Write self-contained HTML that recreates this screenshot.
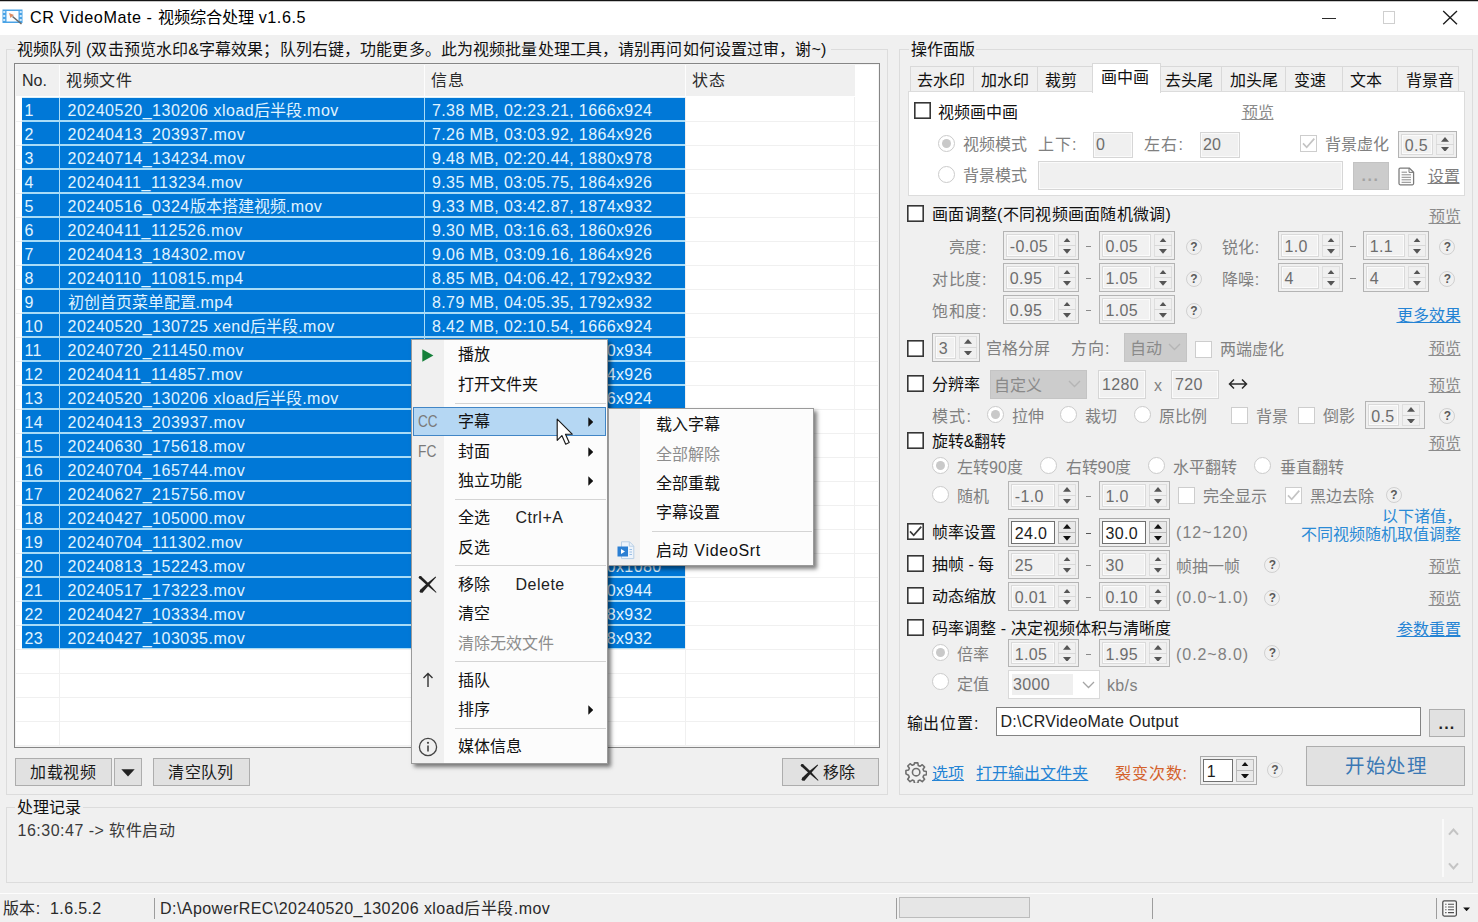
<!DOCTYPE html>
<html lang="zh-CN"><head><meta charset="utf-8"><title>CR VideoMate</title>
<style>
html,body{margin:0;padding:0;}
body{width:1478px;height:922px;overflow:hidden;background:#f0f0f0;position:relative;
 font-family:"Liberation Sans",sans-serif;font-size:16px;}
body>div,body>svg{position:absolute;}
.t{white-space:nowrap;}
</style></head><body>
<div style="left:0px;top:0px;width:1478px;height:34.6px;background:#fff;"></div>
<div style="left:0px;top:0px;width:1478px;height:1px;background:#141414;"></div>
<div style="left:0px;top:1px;width:1478px;height:1px;background:#9b9b9b;opacity:.55;"></div>
<svg style="left:2px;top:9px" width="22" height="16" viewBox="0 0 22 16"><rect x="0.5" y="0.5" width="20" height="13.5" fill="#4aa3e6"/><rect x="4.5" y="2" width="12" height="10.5" fill="#fbfdff"/><rect x="1.2" y="2" width="2" height="2" fill="#cfe8fa"/><rect x="1.2" y="6" width="2" height="2" fill="#cfe8fa"/><rect x="1.2" y="10" width="2" height="2" fill="#cfe8fa"/><rect x="17.7" y="2" width="2" height="2" fill="#cfe8fa"/><rect x="17.7" y="6" width="2" height="2" fill="#cfe8fa"/><rect x="17.7" y="10" width="2" height="2" fill="#cfe8fa"/><path d="M7 4 L12 6 L10 7.5 L8.5 9 Z" fill="#dd8a62"/><path d="M10.5 7.5 L19.5 15" stroke="#6a6a6a" stroke-width="1.6"/></svg>
<div class="t" style="left:30px;top:5.10px;line-height:24px;color:#000;font-size:16.2px;"><span style="letter-spacing:.55px">CR VideoMate - </span>视频综合处理<span style="letter-spacing:.55px"> v1.6.5</span></div>
<div style="left:1322px;top:17.5px;width:13.5px;height:1.4px;background:#2b2b2b;"></div>
<div style="left:1382.5px;top:11px;width:12.5px;height:12.5px;border:1px solid #cfcfcf;box-sizing:border-box;"></div>
<svg style="left:1442px;top:10px" width="16" height="16" viewBox="0 0 16 16"><path d="M1.2 1 L15 14.2 M15 1 L1.2 14.2" stroke="#1d1d1d" stroke-width="1.35" fill="none"/></svg>
<div style="left:6px;top:49px;width:882px;height:746px;border:1px solid #dcdcdc;box-sizing:border-box;"></div>
<div style="left:15px;top:47px;width:816px;height:5px;background:#f0f0f0;"></div>
<div class="t" style="left:17px;top:38.20px;line-height:24px;color:#111;letter-spacing:.12px;">视频队列 (双击预览水印&amp;字幕效果；队列右键，功能更多。此为视频批量处理工具，请别再问如何设置过审，谢~)</div>
<div style="left:899px;top:49px;width:574px;height:746px;border:1px solid #dcdcdc;box-sizing:border-box;"></div>
<div style="left:909px;top:47px;width:67px;height:5px;background:#f0f0f0;"></div>
<div class="t" style="left:911px;top:38.20px;line-height:24px;color:#111;letter-spacing:.12px;">操作面版</div>
<div style="left:6px;top:807px;width:1467px;height:76px;border:1px solid #dcdcdc;box-sizing:border-box;"></div>
<div style="left:15px;top:805px;width:68px;height:5px;background:#f0f0f0;"></div>
<div class="t" style="left:17px;top:796.20px;line-height:24px;color:#111;letter-spacing:.12px;">处理记录</div>
<div style="left:14px;top:63px;width:866px;height:685px;background:#fff;border:1px solid #868686;box-sizing:border-box;box-shadow:inset 0 0 0 1px #f4f4f4;"></div>
<div style="left:16px;top:65.4px;width:839px;height:30.6px;background:#f0f0f0;"></div>
<div style="left:59px;top:65px;width:1px;height:31px;background:#fdfdfd;"></div>
<div style="left:424px;top:65px;width:1px;height:31px;background:#fdfdfd;"></div>
<div style="left:685px;top:65px;width:1px;height:31px;background:#fdfdfd;"></div>
<div class="t" style="left:22px;top:69.40px;line-height:24px;color:#2a2a2a;">No.</div>
<div class="t" style="left:66px;top:69.40px;line-height:24px;color:#2a2a2a;letter-spacing:.7px;">视频文件</div>
<div class="t" style="left:431px;top:69.40px;line-height:24px;color:#2a2a2a;letter-spacing:.7px;">信息</div>
<div class="t" style="left:692px;top:69.40px;line-height:24px;color:#2a2a2a;letter-spacing:.7px;">状态</div>
<div style="left:59px;top:97px;width:1px;height:649px;background:#f0f0f0;"></div>
<div style="left:424px;top:97px;width:1px;height:649px;background:#f0f0f0;"></div>
<div style="left:685px;top:97px;width:1px;height:649px;background:#f0f0f0;"></div>
<div style="left:854px;top:97px;width:1px;height:649px;background:#f0f0f0;"></div>
<div style="left:16px;top:121px;width:862px;height:1px;background:#f0f0f0;"></div>
<div style="left:16px;top:145px;width:862px;height:1px;background:#f0f0f0;"></div>
<div style="left:16px;top:169px;width:862px;height:1px;background:#f0f0f0;"></div>
<div style="left:16px;top:193px;width:862px;height:1px;background:#f0f0f0;"></div>
<div style="left:16px;top:217px;width:862px;height:1px;background:#f0f0f0;"></div>
<div style="left:16px;top:241px;width:862px;height:1px;background:#f0f0f0;"></div>
<div style="left:16px;top:265px;width:862px;height:1px;background:#f0f0f0;"></div>
<div style="left:16px;top:289px;width:862px;height:1px;background:#f0f0f0;"></div>
<div style="left:16px;top:313px;width:862px;height:1px;background:#f0f0f0;"></div>
<div style="left:16px;top:337px;width:862px;height:1px;background:#f0f0f0;"></div>
<div style="left:16px;top:361px;width:862px;height:1px;background:#f0f0f0;"></div>
<div style="left:16px;top:385px;width:862px;height:1px;background:#f0f0f0;"></div>
<div style="left:16px;top:409px;width:862px;height:1px;background:#f0f0f0;"></div>
<div style="left:16px;top:433px;width:862px;height:1px;background:#f0f0f0;"></div>
<div style="left:16px;top:457px;width:862px;height:1px;background:#f0f0f0;"></div>
<div style="left:16px;top:481px;width:862px;height:1px;background:#f0f0f0;"></div>
<div style="left:16px;top:505px;width:862px;height:1px;background:#f0f0f0;"></div>
<div style="left:16px;top:529px;width:862px;height:1px;background:#f0f0f0;"></div>
<div style="left:16px;top:553px;width:862px;height:1px;background:#f0f0f0;"></div>
<div style="left:16px;top:577px;width:862px;height:1px;background:#f0f0f0;"></div>
<div style="left:16px;top:601px;width:862px;height:1px;background:#f0f0f0;"></div>
<div style="left:16px;top:625px;width:862px;height:1px;background:#f0f0f0;"></div>
<div style="left:16px;top:649px;width:862px;height:1px;background:#f0f0f0;"></div>
<div style="left:16px;top:673px;width:862px;height:1px;background:#f0f0f0;"></div>
<div style="left:16px;top:697px;width:862px;height:1px;background:#f0f0f0;"></div>
<div style="left:16px;top:721px;width:862px;height:1px;background:#f0f0f0;"></div>
<div style="left:16px;top:745px;width:862px;height:1px;background:#f0f0f0;"></div>
<div style="left:22px;top:97px;width:663.4px;height:25px;background:#a9dcf7;"></div>
<div style="left:22px;top:98px;width:37px;height:22.4px;background:#0078d7;"></div>
<div style="left:60px;top:98px;width:364px;height:22.4px;background:#0078d7;"></div>
<div style="left:425px;top:98px;width:260.3px;height:22.4px;background:#0078d7;"></div>
<div class="t" style="left:24.5px;top:99.20px;line-height:24px;color:#e0f4ff;letter-spacing:.36px;">1</div>
<div class="t" style="left:67.5px;top:99.20px;line-height:24px;color:#e0f4ff;letter-spacing:.5px;">20240520_130206 xload<span style="letter-spacing:0">后半段</span>.mov</div>
<div class="t" style="left:432px;top:99.20px;line-height:24px;color:#e0f4ff;letter-spacing:.38px;">7.38 MB, 02:23.21, 1666x924</div>
<div style="left:22px;top:121px;width:663.4px;height:25px;background:#a9dcf7;"></div>
<div style="left:22px;top:122px;width:37px;height:22.4px;background:#0078d7;"></div>
<div style="left:60px;top:122px;width:364px;height:22.4px;background:#0078d7;"></div>
<div style="left:425px;top:122px;width:260.3px;height:22.4px;background:#0078d7;"></div>
<div class="t" style="left:24.5px;top:123.20px;line-height:24px;color:#e0f4ff;letter-spacing:.36px;">2</div>
<div class="t" style="left:67.5px;top:123.20px;line-height:24px;color:#e0f4ff;letter-spacing:.5px;">20240413_203937.mov</div>
<div class="t" style="left:432px;top:123.20px;line-height:24px;color:#e0f4ff;letter-spacing:.38px;">7.26 MB, 03:03.92, 1864x926</div>
<div style="left:22px;top:145px;width:663.4px;height:25px;background:#a9dcf7;"></div>
<div style="left:22px;top:146px;width:37px;height:22.4px;background:#0078d7;"></div>
<div style="left:60px;top:146px;width:364px;height:22.4px;background:#0078d7;"></div>
<div style="left:425px;top:146px;width:260.3px;height:22.4px;background:#0078d7;"></div>
<div class="t" style="left:24.5px;top:147.20px;line-height:24px;color:#e0f4ff;letter-spacing:.36px;">3</div>
<div class="t" style="left:67.5px;top:147.20px;line-height:24px;color:#e0f4ff;letter-spacing:.5px;">20240714_134234.mov</div>
<div class="t" style="left:432px;top:147.20px;line-height:24px;color:#e0f4ff;letter-spacing:.38px;">9.48 MB, 02:20.44, 1880x978</div>
<div style="left:22px;top:169px;width:663.4px;height:25px;background:#a9dcf7;"></div>
<div style="left:22px;top:170px;width:37px;height:22.4px;background:#0078d7;"></div>
<div style="left:60px;top:170px;width:364px;height:22.4px;background:#0078d7;"></div>
<div style="left:425px;top:170px;width:260.3px;height:22.4px;background:#0078d7;"></div>
<div class="t" style="left:24.5px;top:171.20px;line-height:24px;color:#e0f4ff;letter-spacing:.36px;">4</div>
<div class="t" style="left:67.5px;top:171.20px;line-height:24px;color:#e0f4ff;letter-spacing:.5px;">20240411_113234.mov</div>
<div class="t" style="left:432px;top:171.20px;line-height:24px;color:#e0f4ff;letter-spacing:.38px;">9.35 MB, 03:05.75, 1864x926</div>
<div style="left:22px;top:193px;width:663.4px;height:25px;background:#a9dcf7;"></div>
<div style="left:22px;top:194px;width:37px;height:22.4px;background:#0078d7;"></div>
<div style="left:60px;top:194px;width:364px;height:22.4px;background:#0078d7;"></div>
<div style="left:425px;top:194px;width:260.3px;height:22.4px;background:#0078d7;"></div>
<div class="t" style="left:24.5px;top:195.20px;line-height:24px;color:#e0f4ff;letter-spacing:.36px;">5</div>
<div class="t" style="left:67.5px;top:195.20px;line-height:24px;color:#e0f4ff;letter-spacing:.5px;">20240516_0324<span style="letter-spacing:0">版本搭建视频</span>.mov</div>
<div class="t" style="left:432px;top:195.20px;line-height:24px;color:#e0f4ff;letter-spacing:.38px;">9.33 MB, 03:42.87, 1874x932</div>
<div style="left:22px;top:217px;width:663.4px;height:25px;background:#a9dcf7;"></div>
<div style="left:22px;top:218px;width:37px;height:22.4px;background:#0078d7;"></div>
<div style="left:60px;top:218px;width:364px;height:22.4px;background:#0078d7;"></div>
<div style="left:425px;top:218px;width:260.3px;height:22.4px;background:#0078d7;"></div>
<div class="t" style="left:24.5px;top:219.20px;line-height:24px;color:#e0f4ff;letter-spacing:.36px;">6</div>
<div class="t" style="left:67.5px;top:219.20px;line-height:24px;color:#e0f4ff;letter-spacing:.5px;">20240411_112526.mov</div>
<div class="t" style="left:432px;top:219.20px;line-height:24px;color:#e0f4ff;letter-spacing:.38px;">9.30 MB, 03:16.63, 1860x926</div>
<div style="left:22px;top:241px;width:663.4px;height:25px;background:#a9dcf7;"></div>
<div style="left:22px;top:242px;width:37px;height:22.4px;background:#0078d7;"></div>
<div style="left:60px;top:242px;width:364px;height:22.4px;background:#0078d7;"></div>
<div style="left:425px;top:242px;width:260.3px;height:22.4px;background:#0078d7;"></div>
<div class="t" style="left:24.5px;top:243.20px;line-height:24px;color:#e0f4ff;letter-spacing:.36px;">7</div>
<div class="t" style="left:67.5px;top:243.20px;line-height:24px;color:#e0f4ff;letter-spacing:.5px;">20240413_184302.mov</div>
<div class="t" style="left:432px;top:243.20px;line-height:24px;color:#e0f4ff;letter-spacing:.38px;">9.06 MB, 03:09.16, 1864x926</div>
<div style="left:22px;top:265px;width:663.4px;height:25px;background:#a9dcf7;"></div>
<div style="left:22px;top:266px;width:37px;height:22.4px;background:#0078d7;"></div>
<div style="left:60px;top:266px;width:364px;height:22.4px;background:#0078d7;"></div>
<div style="left:425px;top:266px;width:260.3px;height:22.4px;background:#0078d7;"></div>
<div class="t" style="left:24.5px;top:267.20px;line-height:24px;color:#e0f4ff;letter-spacing:.36px;">8</div>
<div class="t" style="left:67.5px;top:267.20px;line-height:24px;color:#e0f4ff;letter-spacing:.5px;">20240110_110815.mp4</div>
<div class="t" style="left:432px;top:267.20px;line-height:24px;color:#e0f4ff;letter-spacing:.38px;">8.85 MB, 04:06.42, 1792x932</div>
<div style="left:22px;top:289px;width:663.4px;height:25px;background:#a9dcf7;"></div>
<div style="left:22px;top:290px;width:37px;height:22.4px;background:#0078d7;"></div>
<div style="left:60px;top:290px;width:364px;height:22.4px;background:#0078d7;"></div>
<div style="left:425px;top:290px;width:260.3px;height:22.4px;background:#0078d7;"></div>
<div class="t" style="left:24.5px;top:291.20px;line-height:24px;color:#e0f4ff;letter-spacing:.36px;">9</div>
<div class="t" style="left:67.5px;top:291.20px;line-height:24px;color:#e0f4ff;letter-spacing:.5px;"><span style="letter-spacing:0">初创首页菜单配置</span>.mp4</div>
<div class="t" style="left:432px;top:291.20px;line-height:24px;color:#e0f4ff;letter-spacing:.38px;">8.79 MB, 04:05.35, 1792x932</div>
<div style="left:22px;top:313px;width:663.4px;height:25px;background:#a9dcf7;"></div>
<div style="left:22px;top:314px;width:37px;height:22.4px;background:#0078d7;"></div>
<div style="left:60px;top:314px;width:364px;height:22.4px;background:#0078d7;"></div>
<div style="left:425px;top:314px;width:260.3px;height:22.4px;background:#0078d7;"></div>
<div class="t" style="left:24.5px;top:315.20px;line-height:24px;color:#e0f4ff;letter-spacing:.36px;">10</div>
<div class="t" style="left:67.5px;top:315.20px;line-height:24px;color:#e0f4ff;letter-spacing:.5px;">20240520_130725 xend<span style="letter-spacing:0">后半段</span>.mov</div>
<div class="t" style="left:432px;top:315.20px;line-height:24px;color:#e0f4ff;letter-spacing:.38px;">8.42 MB, 02:10.54, 1666x924</div>
<div style="left:22px;top:337px;width:663.4px;height:25px;background:#a9dcf7;"></div>
<div style="left:22px;top:338px;width:37px;height:22.4px;background:#0078d7;"></div>
<div style="left:60px;top:338px;width:364px;height:22.4px;background:#0078d7;"></div>
<div style="left:425px;top:338px;width:260.3px;height:22.4px;background:#0078d7;"></div>
<div class="t" style="left:24.5px;top:339.20px;line-height:24px;color:#e0f4ff;letter-spacing:.36px;">11</div>
<div class="t" style="left:67.5px;top:339.20px;line-height:24px;color:#e0f4ff;letter-spacing:.5px;">20240720_211450.mov</div>
<div class="t" style="left:432px;top:339.20px;line-height:24px;color:#e0f4ff;letter-spacing:.38px;">8.31 MB, 02:31.90, 1870x934</div>
<div style="left:22px;top:361px;width:663.4px;height:25px;background:#a9dcf7;"></div>
<div style="left:22px;top:362px;width:37px;height:22.4px;background:#0078d7;"></div>
<div style="left:60px;top:362px;width:364px;height:22.4px;background:#0078d7;"></div>
<div style="left:425px;top:362px;width:260.3px;height:22.4px;background:#0078d7;"></div>
<div class="t" style="left:24.5px;top:363.20px;line-height:24px;color:#e0f4ff;letter-spacing:.36px;">12</div>
<div class="t" style="left:67.5px;top:363.20px;line-height:24px;color:#e0f4ff;letter-spacing:.5px;">20240411_114857.mov</div>
<div class="t" style="left:432px;top:363.20px;line-height:24px;color:#e0f4ff;letter-spacing:.38px;">8.20 MB, 03:17.34, 1864x926</div>
<div style="left:22px;top:385px;width:663.4px;height:25px;background:#a9dcf7;"></div>
<div style="left:22px;top:386px;width:37px;height:22.4px;background:#0078d7;"></div>
<div style="left:60px;top:386px;width:364px;height:22.4px;background:#0078d7;"></div>
<div style="left:425px;top:386px;width:260.3px;height:22.4px;background:#0078d7;"></div>
<div class="t" style="left:24.5px;top:387.20px;line-height:24px;color:#e0f4ff;letter-spacing:.36px;">13</div>
<div class="t" style="left:67.5px;top:387.20px;line-height:24px;color:#e0f4ff;letter-spacing:.5px;">20240520_130206 xload<span style="letter-spacing:0">后半段</span>.mov</div>
<div class="t" style="left:432px;top:387.20px;line-height:24px;color:#e0f4ff;letter-spacing:.38px;">7.38 MB, 02:23.21, 1666x924</div>
<div style="left:22px;top:409px;width:663.4px;height:25px;background:#a9dcf7;"></div>
<div style="left:22px;top:410px;width:37px;height:22.4px;background:#0078d7;"></div>
<div style="left:60px;top:410px;width:364px;height:22.4px;background:#0078d7;"></div>
<div style="left:425px;top:410px;width:260.3px;height:22.4px;background:#0078d7;"></div>
<div class="t" style="left:24.5px;top:411.20px;line-height:24px;color:#e0f4ff;letter-spacing:.36px;">14</div>
<div class="t" style="left:67.5px;top:411.20px;line-height:24px;color:#e0f4ff;letter-spacing:.5px;">20240413_203937.mov</div>
<div class="t" style="left:432px;top:411.20px;line-height:24px;color:#e0f4ff;letter-spacing:.38px;">7.26 MB, 03:03.92, 1864x926</div>
<div style="left:22px;top:433px;width:663.4px;height:25px;background:#a9dcf7;"></div>
<div style="left:22px;top:434px;width:37px;height:22.4px;background:#0078d7;"></div>
<div style="left:60px;top:434px;width:364px;height:22.4px;background:#0078d7;"></div>
<div style="left:425px;top:434px;width:260.3px;height:22.4px;background:#0078d7;"></div>
<div class="t" style="left:24.5px;top:435.20px;line-height:24px;color:#e0f4ff;letter-spacing:.36px;">15</div>
<div class="t" style="left:67.5px;top:435.20px;line-height:24px;color:#e0f4ff;letter-spacing:.5px;">20240630_175618.mov</div>
<div class="t" style="left:432px;top:435.20px;line-height:24px;color:#e0f4ff;letter-spacing:.38px;">7.18 MB, 02:45.10, 1872x930</div>
<div style="left:22px;top:457px;width:663.4px;height:25px;background:#a9dcf7;"></div>
<div style="left:22px;top:458px;width:37px;height:22.4px;background:#0078d7;"></div>
<div style="left:60px;top:458px;width:364px;height:22.4px;background:#0078d7;"></div>
<div style="left:425px;top:458px;width:260.3px;height:22.4px;background:#0078d7;"></div>
<div class="t" style="left:24.5px;top:459.20px;line-height:24px;color:#e0f4ff;letter-spacing:.36px;">16</div>
<div class="t" style="left:67.5px;top:459.20px;line-height:24px;color:#e0f4ff;letter-spacing:.5px;">20240704_165744.mov</div>
<div class="t" style="left:432px;top:459.20px;line-height:24px;color:#e0f4ff;letter-spacing:.38px;">7.02 MB, 02:38.66, 1868x928</div>
<div style="left:22px;top:481px;width:663.4px;height:25px;background:#a9dcf7;"></div>
<div style="left:22px;top:482px;width:37px;height:22.4px;background:#0078d7;"></div>
<div style="left:60px;top:482px;width:364px;height:22.4px;background:#0078d7;"></div>
<div style="left:425px;top:482px;width:260.3px;height:22.4px;background:#0078d7;"></div>
<div class="t" style="left:24.5px;top:483.20px;line-height:24px;color:#e0f4ff;letter-spacing:.36px;">17</div>
<div class="t" style="left:67.5px;top:483.20px;line-height:24px;color:#e0f4ff;letter-spacing:.5px;">20240627_215756.mov</div>
<div class="t" style="left:432px;top:483.20px;line-height:24px;color:#e0f4ff;letter-spacing:.38px;">6.95 MB, 02:51.27, 1866x926</div>
<div style="left:22px;top:505px;width:663.4px;height:25px;background:#a9dcf7;"></div>
<div style="left:22px;top:506px;width:37px;height:22.4px;background:#0078d7;"></div>
<div style="left:60px;top:506px;width:364px;height:22.4px;background:#0078d7;"></div>
<div style="left:425px;top:506px;width:260.3px;height:22.4px;background:#0078d7;"></div>
<div class="t" style="left:24.5px;top:507.20px;line-height:24px;color:#e0f4ff;letter-spacing:.36px;">18</div>
<div class="t" style="left:67.5px;top:507.20px;line-height:24px;color:#e0f4ff;letter-spacing:.5px;">20240427_105000.mov</div>
<div class="t" style="left:432px;top:507.20px;line-height:24px;color:#e0f4ff;letter-spacing:.38px;">6.80 MB, 02:29.83, 1870x932</div>
<div style="left:22px;top:529px;width:663.4px;height:25px;background:#a9dcf7;"></div>
<div style="left:22px;top:530px;width:37px;height:22.4px;background:#0078d7;"></div>
<div style="left:60px;top:530px;width:364px;height:22.4px;background:#0078d7;"></div>
<div style="left:425px;top:530px;width:260.3px;height:22.4px;background:#0078d7;"></div>
<div class="t" style="left:24.5px;top:531.20px;line-height:24px;color:#e0f4ff;letter-spacing:.36px;">19</div>
<div class="t" style="left:67.5px;top:531.20px;line-height:24px;color:#e0f4ff;letter-spacing:.5px;">20240704_111302.mov</div>
<div class="t" style="left:432px;top:531.20px;line-height:24px;color:#e0f4ff;letter-spacing:.38px;">6.74 MB, 02:44.05, 1864x930</div>
<div style="left:22px;top:553px;width:663.4px;height:25px;background:#a9dcf7;"></div>
<div style="left:22px;top:554px;width:37px;height:22.4px;background:#0078d7;"></div>
<div style="left:60px;top:554px;width:364px;height:22.4px;background:#0078d7;"></div>
<div style="left:425px;top:554px;width:260.3px;height:22.4px;background:#0078d7;"></div>
<div class="t" style="left:24.5px;top:555.20px;line-height:24px;color:#e0f4ff;letter-spacing:.36px;">20</div>
<div class="t" style="left:67.5px;top:555.20px;line-height:24px;color:#e0f4ff;letter-spacing:.5px;">20240813_152243.mov</div>
<div class="t" style="left:432px;top:555.20px;line-height:24px;color:#e0f4ff;letter-spacing:.38px;">6.51 MB, 03:20.48, 1920x1080</div>
<div style="left:22px;top:577px;width:663.4px;height:25px;background:#a9dcf7;"></div>
<div style="left:22px;top:578px;width:37px;height:22.4px;background:#0078d7;"></div>
<div style="left:60px;top:578px;width:364px;height:22.4px;background:#0078d7;"></div>
<div style="left:425px;top:578px;width:260.3px;height:22.4px;background:#0078d7;"></div>
<div class="t" style="left:24.5px;top:579.20px;line-height:24px;color:#e0f4ff;letter-spacing:.36px;">21</div>
<div class="t" style="left:67.5px;top:579.20px;line-height:24px;color:#e0f4ff;letter-spacing:.5px;">20240517_173223.mov</div>
<div class="t" style="left:432px;top:579.20px;line-height:24px;color:#e0f4ff;letter-spacing:.38px;">6.33 MB, 02:12.71, 1880x944</div>
<div style="left:22px;top:601px;width:663.4px;height:25px;background:#a9dcf7;"></div>
<div style="left:22px;top:602px;width:37px;height:22.4px;background:#0078d7;"></div>
<div style="left:60px;top:602px;width:364px;height:22.4px;background:#0078d7;"></div>
<div style="left:425px;top:602px;width:260.3px;height:22.4px;background:#0078d7;"></div>
<div class="t" style="left:24.5px;top:603.20px;line-height:24px;color:#e0f4ff;letter-spacing:.36px;">22</div>
<div class="t" style="left:67.5px;top:603.20px;line-height:24px;color:#e0f4ff;letter-spacing:.5px;">20240427_103334.mov</div>
<div class="t" style="left:432px;top:603.20px;line-height:24px;color:#e0f4ff;letter-spacing:.38px;">6.21 MB, 02:08.36, 1868x932</div>
<div style="left:22px;top:625px;width:663.4px;height:23.6px;background:#a9dcf7;"></div>
<div style="left:22px;top:626px;width:37px;height:22.4px;background:#0078d7;"></div>
<div style="left:60px;top:626px;width:364px;height:22.4px;background:#0078d7;"></div>
<div style="left:425px;top:626px;width:260.3px;height:22.4px;background:#0078d7;"></div>
<div class="t" style="left:24.5px;top:627.20px;line-height:24px;color:#e0f4ff;letter-spacing:.36px;">23</div>
<div class="t" style="left:67.5px;top:627.20px;line-height:24px;color:#e0f4ff;letter-spacing:.5px;">20240427_103035.mov</div>
<div class="t" style="left:432px;top:627.20px;line-height:24px;color:#e0f4ff;letter-spacing:.38px;">6.07 MB, 02:03.59, 1868x932</div>
<div style="left:22px;top:96.5px;width:663.4px;height:1.2px;background:#d9effb;"></div>
<div style="left:15px;top:758px;width:96.5px;height:27.5px;background:#e1e1e1;border:1px solid #adadad;box-sizing:border-box;"></div>
<div class="t" style="left:15px;top:758px;width:96.5px;height:27.5px;line-height:29.5px;text-align:center;color:#1a1a1a;letter-spacing:.4px;">加载视频</div>
<div style="left:114px;top:758px;width:27.5px;height:27.5px;background:#e1e1e1;border:1px solid #adadad;box-sizing:border-box;"></div>
<div class="t" style="left:114px;top:758px;width:27.5px;height:27.5px;line-height:29.5px;text-align:center;color:#1a1a1a;"></div>
<svg style="left:121px;top:769px" width="14" height="8" viewBox="0 0 14 8"><path d="M0.3 0.3 H13.7 L7 7.6 Z" fill="#222"/></svg>
<div style="left:152.5px;top:758px;width:97px;height:27.5px;background:#e1e1e1;border:1px solid #adadad;box-sizing:border-box;"></div>
<div class="t" style="left:152.5px;top:758px;width:97px;height:27.5px;line-height:29.5px;text-align:center;color:#1a1a1a;letter-spacing:.4px;">清空队列</div>
<div style="left:782px;top:758px;width:97px;height:27.5px;background:#e1e1e1;border:1px solid #adadad;box-sizing:border-box;"></div>
<div class="t" style="left:782px;top:758px;width:97px;height:27.5px;line-height:29.5px;text-align:center;color:#1a1a1a;"></div>
<svg style="left:800px;top:763.3px" width="19.5" height="19.5" viewBox="0 0 20 20"><path d="M0.9 3 L2.9 1 L11 8.6 L19 17.6 L18.4 18.2 L9.2 10.6 Z" fill="#222"/><path d="M2 15.4 L4.6 18.2 L11.2 10.6 L18.6 2.2 L18 1.6 L9.4 8.4 Z" fill="#222"/><circle cx="2.2" cy="2.3" r="1.4" fill="#222"/><circle cx="3.4" cy="16.6" r="1.7" fill="#222"/></svg>
<div class="t" style="left:822.5px;top:760.90px;line-height:24px;color:#1a1a1a;letter-spacing:.7px;">移除</div>
<div class="t" style="left:17.5px;top:819.20px;line-height:24px;color:#3a3a3a;letter-spacing:.5px;">16:30:47 -&gt; 软件启动</div>
<div style="left:1442px;top:819px;width:1.5px;height:58px;background:#fafafa;"></div>
<svg style="left:1448px;top:827px" width="11" height="9" viewBox="0 0 11 9"><path d="M1 7.6 L5.5 2.6 L10 7.6" stroke="#c4c4c4" stroke-width="2.1" fill="none"/></svg>
<svg style="left:1448px;top:861.5px" width="11" height="9" viewBox="0 0 11 9"><path d="M1 1.4 L5.5 6.4 L10 1.4" stroke="#c4c4c4" stroke-width="2.1" fill="none"/></svg>
<div style="left:0px;top:892.5px;width:1478px;height:1.8px;background:#fdfdfd;"></div>
<div class="t" style="left:3px;top:897.30px;line-height:24px;color:#2a2a2a;letter-spacing:.35px;">版本:&nbsp; 1.6.5.2</div>
<div style="left:154px;top:897.5px;width:1.2px;height:21.5px;background:#9d9d9d;"></div>
<div class="t" style="left:160px;top:897.30px;line-height:24px;color:#2a2a2a;letter-spacing:.45px;">D:\ApowerREC\20240520_130206 xload后半段.mov</div>
<div style="left:896px;top:897.5px;width:1.2px;height:21.5px;background:#9d9d9d;"></div>
<div style="left:899px;top:897px;width:131px;height:20.5px;background:#e6e6e6;border:1px solid #bcbcbc;box-sizing:border-box;"></div>
<div style="left:1151.5px;top:897.5px;width:1.2px;height:21.5px;background:#9d9d9d;"></div>
<div style="left:1436px;top:897.5px;width:1.2px;height:21.5px;background:#9d9d9d;"></div>
<svg style="left:1442px;top:900px" width="16" height="17" viewBox="0 0 16 17"><rect x="0.8" y="0.8" width="13.6" height="15.2" rx="1.5" fill="#f8f8f8" stroke="#4d4d4d" stroke-width="1.25"/><path d="M3.2 4.2h1.3M6 4.2h6M3.2 7h1.3M6 7h6M3.2 9.8h1.3M6 9.8h6M3.2 12.6h1.3M6 12.6h6" stroke="#4d4d4d" stroke-width="1.1"/></svg>
<svg style="left:1463.3px;top:906.8px" width="7.2" height="4.6" viewBox="0 0 9 6"><path d="M0 0.5 H9 L4.5 5.5 Z" fill="#111"/></svg>
<div style="left:910px;top:66px;width:64px;height:26.5px;border:1px solid #d9d9d9;box-sizing:border-box;background:#f0f0f0;"></div>
<div class="t" style="left:917px;top:69.30px;line-height:24px;color:#111;">去水印</div>
<div style="left:973px;top:66px;width:64.5px;height:26.5px;border:1px solid #d9d9d9;box-sizing:border-box;background:#f0f0f0;"></div>
<div class="t" style="left:981px;top:69.30px;line-height:24px;color:#111;">加水印</div>
<div style="left:1036.5px;top:66px;width:56.0px;height:26.5px;border:1px solid #d9d9d9;box-sizing:border-box;background:#f0f0f0;"></div>
<div class="t" style="left:1045px;top:69.30px;line-height:24px;color:#111;">裁剪</div>
<div style="left:1159.5px;top:66px;width:62.5px;height:26.5px;border:1px solid #d9d9d9;box-sizing:border-box;background:#f0f0f0;"></div>
<div class="t" style="left:1165px;top:69.30px;line-height:24px;color:#111;">去头尾</div>
<div style="left:1221px;top:66px;width:65px;height:26.5px;border:1px solid #d9d9d9;box-sizing:border-box;background:#f0f0f0;"></div>
<div class="t" style="left:1229.5px;top:69.30px;line-height:24px;color:#111;">加头尾</div>
<div style="left:1285px;top:66px;width:57.5px;height:26.5px;border:1px solid #d9d9d9;box-sizing:border-box;background:#f0f0f0;"></div>
<div class="t" style="left:1293.5px;top:69.30px;line-height:24px;color:#111;">变速</div>
<div style="left:1341.5px;top:66px;width:56.5px;height:26.5px;border:1px solid #d9d9d9;box-sizing:border-box;background:#f0f0f0;"></div>
<div class="t" style="left:1350px;top:69.30px;line-height:24px;color:#111;">文本</div>
<div style="left:1397px;top:66px;width:62px;height:26.5px;border:1px solid #d9d9d9;box-sizing:border-box;background:#f0f0f0;"></div>
<div class="t" style="left:1405.5px;top:69.30px;line-height:24px;color:#111;">背景音</div>
<div style="left:908px;top:91px;width:557px;height:105px;background:#fff;border:1px solid #dcdcdc;box-sizing:border-box;"></div>
<div style="left:1091.5px;top:63px;width:69px;height:29.5px;background:#fff;border:1px solid #d9d9d9;border-bottom:none;box-sizing:border-box;"></div>
<div class="t" style="left:1101px;top:66.10px;line-height:24px;color:#111;">画中画</div>
<svg style="left:913.5px;top:102.4px" width="17" height="17" viewBox="0 0 17 17"><rect x="0.8" y="0.8" width="15.4" height="15.4" fill="#fff" stroke="#363636" stroke-width="1.6"/></svg>
<div class="t" style="left:938px;top:100.90px;line-height:24px;color:#111;">视频画中画</div>
<div class="t" style="right:204.5px;top:100.90px;line-height:24px;color:#8a8a8a;text-decoration:underline;text-underline-offset:.6px;text-decoration-thickness:1.2px;">预览</div>
<div style="left:937.7px;top:135.1px;width:17px;height:17px;background:#fff;border:1px solid #cbcbcb;border-radius:50%;box-sizing:border-box;"></div>
<div style="left:941.7px;top:139.1px;width:9px;height:9px;background:#c9c9c9;border-radius:50%;"></div>
<div class="t" style="left:962.5px;top:133.40px;line-height:24px;color:#808080;">视频模式</div>
<div class="t" style="left:1037.5px;top:133.40px;line-height:24px;color:#808080;letter-spacing:1.2px;">上下:</div>
<div style="left:1092.5px;top:131.5px;width:40px;height:26px;background:#f0f0f0;border:1px solid #d6d6d6;box-sizing:border-box;box-shadow:inset 0 0 0 1px #fafafa;"></div>
<div class="t" style="left:1096px;top:133.40px;line-height:24px;color:#6d6d6d;">0</div>
<div class="t" style="left:1144px;top:133.40px;line-height:24px;color:#808080;letter-spacing:1.2px;">左右:</div>
<div style="left:1199.5px;top:131.5px;width:40px;height:26px;background:#f0f0f0;border:1px solid #d6d6d6;box-sizing:border-box;box-shadow:inset 0 0 0 1px #fafafa;"></div>
<div class="t" style="left:1203px;top:133.40px;line-height:24px;color:#6d6d6d;">20</div>
<div style="left:1299.5px;top:135px;width:17px;height:17px;background:#fff;border:1px solid #cdcdcd;box-sizing:border-box;"></div>
<svg style="left:1299.5px;top:135px" width="17" height="17" viewBox="0 0 17 17"><path d="M3 8.4 L6.7 12.3 L14.3 3.6" stroke="#c4c4c4" stroke-width="1.7" fill="none"/></svg>
<div class="t" style="left:1324.5px;top:133.40px;line-height:24px;color:#808080;">背景虚化</div>
<div style="left:1398.2px;top:131px;width:58.5px;height:26.5px;border:1px solid #b4b4b4;box-sizing:border-box;background:#f0f0f0;"></div>
<div style="left:1401.2px;top:134px;width:32px;height:20.5px;background:#f1f1f1;border:1px solid #dadada;box-sizing:border-box;box-shadow:inset 0 0 0 1px #fbfbfb;"></div>
<div class="t" style="left:1404.7px;top:133.95px;line-height:24px;color:#6d6d6d;letter-spacing:.36px;">0.5</div>
<div style="left:1436.2px;top:134px;width:18px;height:20.5px;border:1px solid #dedede;box-sizing:border-box;background:#f0f0f0;"></div>
<div style="left:1436.2px;top:143.75px;width:18px;height:1.2px;background:#d8d8d8;"></div>
<svg style="left:1441.2px;top:137.2px" width="8" height="4.8" viewBox="0 0 8 4.8"><path d="M0 4.8 L4 0 L8 4.8 Z" fill="#555"/></svg>
<svg style="left:1441.2px;top:146.7px" width="8" height="4.8" viewBox="0 0 8 4.8"><path d="M0 0 L4 4.8 L8 0 Z" fill="#555"/></svg>
<div style="left:937.7px;top:165.5px;width:17px;height:17px;background:#fff;border:1px solid #cbcbcb;border-radius:50%;box-sizing:border-box;"></div>
<div class="t" style="left:962.5px;top:164.40px;line-height:24px;color:#808080;">背景模式</div>
<div style="left:1038px;top:161px;width:305px;height:28.5px;background:#f0f0f0;border:1px solid #d6d6d6;box-sizing:border-box;box-shadow:inset 0 0 0 1px #fafafa;"></div>
<div style="left:1353px;top:162px;width:35.5px;height:27.5px;background:#cccccc;border:1px solid #c3c3c3;box-sizing:border-box;"></div>
<div class="t" style="left:1361.5px;top:163.90px;line-height:24px;color:#a3a3a3;letter-spacing:1.5px;font-weight:bold;">...</div>
<svg style="left:1398px;top:167px" width="17" height="19" viewBox="0 0 17 19"><path d="M2.2 1 H11.2 L15.6 5.2 V16.6 Q15.6 17.8 14.4 17.8 H2.2 Q1 17.8 1 16.6 V2.2 Q1 1 2.2 1 Z" fill="#fdfdfd" stroke="#7a7a7a" stroke-width="1.25" stroke-linejoin="round"/><path d="M11 1.2 V5.4 H15.3" fill="none" stroke="#7a7a7a" stroke-width="1"/><path d="M3.6 5.2 H9 M3.6 7.8 H13 M3.6 10.3 H13 M3.6 12.8 H13 M3.6 15.3 H13" stroke="#8a8a8a" stroke-width="1"/></svg>
<div class="t" style="right:18.5px;top:165.40px;line-height:24px;color:#7d7d7d;text-decoration:underline;text-underline-offset:.6px;text-decoration-thickness:1.2px;">设置</div>
<svg style="left:907px;top:205.4px" width="17" height="17" viewBox="0 0 17 17"><rect x="0.8" y="0.8" width="15.4" height="15.4" fill="#fff" stroke="#363636" stroke-width="1.6"/></svg>
<div class="t" style="left:932px;top:203.40px;line-height:24px;color:#111;letter-spacing:.28px;">画面调整(不同视频画面随机微调)</div>
<div class="t" style="right:17.5px;top:205.20px;line-height:24px;color:#8a8a8a;text-decoration:underline;text-underline-offset:.6px;text-decoration-thickness:1.2px;">预览</div>
<div class="t" style="right:491px;top:235.50px;line-height:24px;color:#808080;letter-spacing:.6px;">亮度:</div>
<div style="left:1003.2px;top:231.3px;width:75.7px;height:28.5px;border:1px solid #b4b4b4;box-sizing:border-box;background:#f0f0f0;"></div>
<div style="left:1006.2px;top:234.3px;width:48.7px;height:22.5px;background:#f1f1f1;border:1px solid #dadada;box-sizing:border-box;box-shadow:inset 0 0 0 1px #fbfbfb;"></div>
<div class="t" style="left:1009.7px;top:235.25px;line-height:24px;color:#6d6d6d;letter-spacing:.36px;">-0.05</div>
<div style="left:1057.9px;top:234.3px;width:18px;height:22.5px;border:1px solid #dedede;box-sizing:border-box;background:#f0f0f0;"></div>
<div style="left:1057.9px;top:245.05px;width:18px;height:1.2px;background:#d8d8d8;"></div>
<svg style="left:1062.9px;top:237.5px" width="8" height="4.8" viewBox="0 0 8 4.8"><path d="M0 4.8 L4 0 L8 4.8 Z" fill="#555"/></svg>
<svg style="left:1062.9px;top:249.0px" width="8" height="4.8" viewBox="0 0 8 4.8"><path d="M0 0 L4 4.8 L8 0 Z" fill="#555"/></svg>
<div style="left:1085.8px;top:246px;width:5.5px;height:1.3px;background:#8a8a8a;"></div>
<div style="left:1099px;top:231.3px;width:75.7px;height:28.5px;border:1px solid #b4b4b4;box-sizing:border-box;background:#f0f0f0;"></div>
<div style="left:1102px;top:234.3px;width:48.7px;height:22.5px;background:#f1f1f1;border:1px solid #dadada;box-sizing:border-box;box-shadow:inset 0 0 0 1px #fbfbfb;"></div>
<div class="t" style="left:1105.5px;top:235.25px;line-height:24px;color:#6d6d6d;letter-spacing:.36px;">0.05</div>
<div style="left:1153.7px;top:234.3px;width:18px;height:22.5px;border:1px solid #dedede;box-sizing:border-box;background:#f0f0f0;"></div>
<div style="left:1153.7px;top:245.05px;width:18px;height:1.2px;background:#d8d8d8;"></div>
<svg style="left:1158.7px;top:237.5px" width="8" height="4.8" viewBox="0 0 8 4.8"><path d="M0 4.8 L4 0 L8 4.8 Z" fill="#555"/></svg>
<svg style="left:1158.7px;top:249.0px" width="8" height="4.8" viewBox="0 0 8 4.8"><path d="M0 0 L4 4.8 L8 0 Z" fill="#555"/></svg>
<div style="left:1185.8px;top:238.60000000000002px;width:16px;height:16px;border:1px solid #d0d0d0;border-radius:50%;box-sizing:border-box;"></div>
<div class="t" style="left:1185.8px;top:238.60000000000002px;width:16px;height:16px;line-height:16.5px;text-align:center;font-size:12px;font-weight:bold;color:#5a5a5a;">?</div>
<div class="t" style="right:491px;top:267.50px;line-height:24px;color:#808080;letter-spacing:.6px;">对比度:</div>
<div style="left:1003.2px;top:263.3px;width:75.7px;height:28.5px;border:1px solid #b4b4b4;box-sizing:border-box;background:#f0f0f0;"></div>
<div style="left:1006.2px;top:266.3px;width:48.7px;height:22.5px;background:#f1f1f1;border:1px solid #dadada;box-sizing:border-box;box-shadow:inset 0 0 0 1px #fbfbfb;"></div>
<div class="t" style="left:1009.7px;top:267.25px;line-height:24px;color:#6d6d6d;letter-spacing:.36px;">0.95</div>
<div style="left:1057.9px;top:266.3px;width:18px;height:22.5px;border:1px solid #dedede;box-sizing:border-box;background:#f0f0f0;"></div>
<div style="left:1057.9px;top:277.05px;width:18px;height:1.2px;background:#d8d8d8;"></div>
<svg style="left:1062.9px;top:269.5px" width="8" height="4.8" viewBox="0 0 8 4.8"><path d="M0 4.8 L4 0 L8 4.8 Z" fill="#555"/></svg>
<svg style="left:1062.9px;top:281.0px" width="8" height="4.8" viewBox="0 0 8 4.8"><path d="M0 0 L4 4.8 L8 0 Z" fill="#555"/></svg>
<div style="left:1085.8px;top:278px;width:5.5px;height:1.3px;background:#8a8a8a;"></div>
<div style="left:1099px;top:263.3px;width:75.7px;height:28.5px;border:1px solid #b4b4b4;box-sizing:border-box;background:#f0f0f0;"></div>
<div style="left:1102px;top:266.3px;width:48.7px;height:22.5px;background:#f1f1f1;border:1px solid #dadada;box-sizing:border-box;box-shadow:inset 0 0 0 1px #fbfbfb;"></div>
<div class="t" style="left:1105.5px;top:267.25px;line-height:24px;color:#6d6d6d;letter-spacing:.36px;">1.05</div>
<div style="left:1153.7px;top:266.3px;width:18px;height:22.5px;border:1px solid #dedede;box-sizing:border-box;background:#f0f0f0;"></div>
<div style="left:1153.7px;top:277.05px;width:18px;height:1.2px;background:#d8d8d8;"></div>
<svg style="left:1158.7px;top:269.5px" width="8" height="4.8" viewBox="0 0 8 4.8"><path d="M0 4.8 L4 0 L8 4.8 Z" fill="#555"/></svg>
<svg style="left:1158.7px;top:281.0px" width="8" height="4.8" viewBox="0 0 8 4.8"><path d="M0 0 L4 4.8 L8 0 Z" fill="#555"/></svg>
<div style="left:1185.8px;top:270.6px;width:16px;height:16px;border:1px solid #d0d0d0;border-radius:50%;box-sizing:border-box;"></div>
<div class="t" style="left:1185.8px;top:270.6px;width:16px;height:16px;line-height:16.5px;text-align:center;font-size:12px;font-weight:bold;color:#5a5a5a;">?</div>
<div class="t" style="right:491px;top:299.50px;line-height:24px;color:#808080;letter-spacing:.6px;">饱和度:</div>
<div style="left:1003.2px;top:295.3px;width:75.7px;height:28.5px;border:1px solid #b4b4b4;box-sizing:border-box;background:#f0f0f0;"></div>
<div style="left:1006.2px;top:298.3px;width:48.7px;height:22.5px;background:#f1f1f1;border:1px solid #dadada;box-sizing:border-box;box-shadow:inset 0 0 0 1px #fbfbfb;"></div>
<div class="t" style="left:1009.7px;top:299.25px;line-height:24px;color:#6d6d6d;letter-spacing:.36px;">0.95</div>
<div style="left:1057.9px;top:298.3px;width:18px;height:22.5px;border:1px solid #dedede;box-sizing:border-box;background:#f0f0f0;"></div>
<div style="left:1057.9px;top:309.05px;width:18px;height:1.2px;background:#d8d8d8;"></div>
<svg style="left:1062.9px;top:301.5px" width="8" height="4.8" viewBox="0 0 8 4.8"><path d="M0 4.8 L4 0 L8 4.8 Z" fill="#555"/></svg>
<svg style="left:1062.9px;top:313.0px" width="8" height="4.8" viewBox="0 0 8 4.8"><path d="M0 0 L4 4.8 L8 0 Z" fill="#555"/></svg>
<div style="left:1085.8px;top:310px;width:5.5px;height:1.3px;background:#8a8a8a;"></div>
<div style="left:1099px;top:295.3px;width:75.7px;height:28.5px;border:1px solid #b4b4b4;box-sizing:border-box;background:#f0f0f0;"></div>
<div style="left:1102px;top:298.3px;width:48.7px;height:22.5px;background:#f1f1f1;border:1px solid #dadada;box-sizing:border-box;box-shadow:inset 0 0 0 1px #fbfbfb;"></div>
<div class="t" style="left:1105.5px;top:299.25px;line-height:24px;color:#6d6d6d;letter-spacing:.36px;">1.05</div>
<div style="left:1153.7px;top:298.3px;width:18px;height:22.5px;border:1px solid #dedede;box-sizing:border-box;background:#f0f0f0;"></div>
<div style="left:1153.7px;top:309.05px;width:18px;height:1.2px;background:#d8d8d8;"></div>
<svg style="left:1158.7px;top:301.5px" width="8" height="4.8" viewBox="0 0 8 4.8"><path d="M0 4.8 L4 0 L8 4.8 Z" fill="#555"/></svg>
<svg style="left:1158.7px;top:313.0px" width="8" height="4.8" viewBox="0 0 8 4.8"><path d="M0 0 L4 4.8 L8 0 Z" fill="#555"/></svg>
<div style="left:1185.8px;top:302.6px;width:16px;height:16px;border:1px solid #d0d0d0;border-radius:50%;box-sizing:border-box;"></div>
<div class="t" style="left:1185.8px;top:302.6px;width:16px;height:16px;line-height:16.5px;text-align:center;font-size:12px;font-weight:bold;color:#5a5a5a;">?</div>
<div class="t" style="left:1221.5px;top:235.50px;line-height:24px;color:#808080;letter-spacing:.6px;">锐化:</div>
<div style="left:1278px;top:231.3px;width:65px;height:28.5px;border:1px solid #b4b4b4;box-sizing:border-box;background:#f0f0f0;"></div>
<div style="left:1281px;top:234.3px;width:38px;height:22.5px;background:#f1f1f1;border:1px solid #dadada;box-sizing:border-box;box-shadow:inset 0 0 0 1px #fbfbfb;"></div>
<div class="t" style="left:1284.5px;top:235.25px;line-height:24px;color:#6d6d6d;letter-spacing:.36px;">1.0</div>
<div style="left:1322px;top:234.3px;width:18px;height:22.5px;border:1px solid #dedede;box-sizing:border-box;background:#f0f0f0;"></div>
<div style="left:1322px;top:245.05px;width:18px;height:1.2px;background:#d8d8d8;"></div>
<svg style="left:1327.0px;top:237.5px" width="8" height="4.8" viewBox="0 0 8 4.8"><path d="M0 4.8 L4 0 L8 4.8 Z" fill="#555"/></svg>
<svg style="left:1327.0px;top:249.0px" width="8" height="4.8" viewBox="0 0 8 4.8"><path d="M0 0 L4 4.8 L8 0 Z" fill="#555"/></svg>
<div style="left:1350.3px;top:246px;width:5.5px;height:1.3px;background:#8a8a8a;"></div>
<div style="left:1363.3px;top:231.3px;width:65.5px;height:28.5px;border:1px solid #b4b4b4;box-sizing:border-box;background:#f0f0f0;"></div>
<div style="left:1366.3px;top:234.3px;width:38.5px;height:22.5px;background:#f1f1f1;border:1px solid #dadada;box-sizing:border-box;box-shadow:inset 0 0 0 1px #fbfbfb;"></div>
<div class="t" style="left:1369.8px;top:235.25px;line-height:24px;color:#6d6d6d;letter-spacing:.36px;">1.1</div>
<div style="left:1407.8px;top:234.3px;width:18px;height:22.5px;border:1px solid #dedede;box-sizing:border-box;background:#f0f0f0;"></div>
<div style="left:1407.8px;top:245.05px;width:18px;height:1.2px;background:#d8d8d8;"></div>
<svg style="left:1412.8px;top:237.5px" width="8" height="4.8" viewBox="0 0 8 4.8"><path d="M0 4.8 L4 0 L8 4.8 Z" fill="#555"/></svg>
<svg style="left:1412.8px;top:249.0px" width="8" height="4.8" viewBox="0 0 8 4.8"><path d="M0 0 L4 4.8 L8 0 Z" fill="#555"/></svg>
<div style="left:1439.3px;top:238.60000000000002px;width:16px;height:16px;border:1px solid #d0d0d0;border-radius:50%;box-sizing:border-box;"></div>
<div class="t" style="left:1439.3px;top:238.60000000000002px;width:16px;height:16px;line-height:16.5px;text-align:center;font-size:12px;font-weight:bold;color:#5a5a5a;">?</div>
<div class="t" style="left:1221.5px;top:267.50px;line-height:24px;color:#808080;letter-spacing:.6px;">降噪:</div>
<div style="left:1278px;top:263.3px;width:65px;height:28.5px;border:1px solid #b4b4b4;box-sizing:border-box;background:#f0f0f0;"></div>
<div style="left:1281px;top:266.3px;width:38px;height:22.5px;background:#f1f1f1;border:1px solid #dadada;box-sizing:border-box;box-shadow:inset 0 0 0 1px #fbfbfb;"></div>
<div class="t" style="left:1284.5px;top:267.25px;line-height:24px;color:#6d6d6d;letter-spacing:.36px;">4</div>
<div style="left:1322px;top:266.3px;width:18px;height:22.5px;border:1px solid #dedede;box-sizing:border-box;background:#f0f0f0;"></div>
<div style="left:1322px;top:277.05px;width:18px;height:1.2px;background:#d8d8d8;"></div>
<svg style="left:1327.0px;top:269.5px" width="8" height="4.8" viewBox="0 0 8 4.8"><path d="M0 4.8 L4 0 L8 4.8 Z" fill="#555"/></svg>
<svg style="left:1327.0px;top:281.0px" width="8" height="4.8" viewBox="0 0 8 4.8"><path d="M0 0 L4 4.8 L8 0 Z" fill="#555"/></svg>
<div style="left:1350.3px;top:278px;width:5.5px;height:1.3px;background:#8a8a8a;"></div>
<div style="left:1363.3px;top:263.3px;width:65.5px;height:28.5px;border:1px solid #b4b4b4;box-sizing:border-box;background:#f0f0f0;"></div>
<div style="left:1366.3px;top:266.3px;width:38.5px;height:22.5px;background:#f1f1f1;border:1px solid #dadada;box-sizing:border-box;box-shadow:inset 0 0 0 1px #fbfbfb;"></div>
<div class="t" style="left:1369.8px;top:267.25px;line-height:24px;color:#6d6d6d;letter-spacing:.36px;">4</div>
<div style="left:1407.8px;top:266.3px;width:18px;height:22.5px;border:1px solid #dedede;box-sizing:border-box;background:#f0f0f0;"></div>
<div style="left:1407.8px;top:277.05px;width:18px;height:1.2px;background:#d8d8d8;"></div>
<svg style="left:1412.8px;top:269.5px" width="8" height="4.8" viewBox="0 0 8 4.8"><path d="M0 4.8 L4 0 L8 4.8 Z" fill="#555"/></svg>
<svg style="left:1412.8px;top:281.0px" width="8" height="4.8" viewBox="0 0 8 4.8"><path d="M0 0 L4 4.8 L8 0 Z" fill="#555"/></svg>
<div style="left:1439.3px;top:270.6px;width:16px;height:16px;border:1px solid #d0d0d0;border-radius:50%;box-sizing:border-box;"></div>
<div class="t" style="left:1439.3px;top:270.6px;width:16px;height:16px;line-height:16.5px;text-align:center;font-size:12px;font-weight:bold;color:#5a5a5a;">?</div>
<div class="t" style="right:17.5px;top:303.60px;line-height:24px;color:#2483d4;text-decoration:underline;text-underline-offset:.6px;text-decoration-thickness:1.2px;">更多效果</div>
<svg style="left:907px;top:340.09999999999997px" width="17" height="17" viewBox="0 0 17 17"><rect x="0.8" y="0.8" width="15.4" height="15.4" fill="#fff" stroke="#363636" stroke-width="1.6"/></svg>
<div style="left:932.2px;top:333px;width:47.5px;height:28.5px;border:1px solid #b4b4b4;box-sizing:border-box;background:#f0f0f0;"></div>
<div style="left:935.2px;top:336px;width:21px;height:22.5px;background:#f1f1f1;border:1px solid #dadada;box-sizing:border-box;box-shadow:inset 0 0 0 1px #fbfbfb;"></div>
<div class="t" style="left:938.7px;top:336.95px;line-height:24px;color:#6d6d6d;letter-spacing:.36px;">3</div>
<div style="left:959.2px;top:336px;width:18px;height:22.5px;border:1px solid #dedede;box-sizing:border-box;background:#f0f0f0;"></div>
<div style="left:959.2px;top:346.75px;width:18px;height:1.2px;background:#d8d8d8;"></div>
<svg style="left:964.2px;top:339.2px" width="8" height="4.8" viewBox="0 0 8 4.8"><path d="M0 4.8 L4 0 L8 4.8 Z" fill="#555"/></svg>
<svg style="left:964.2px;top:350.7px" width="8" height="4.8" viewBox="0 0 8 4.8"><path d="M0 0 L4 4.8 L8 0 Z" fill="#555"/></svg>
<div class="t" style="left:985.5px;top:337.40px;line-height:24px;color:#808080;">宫格分屏</div>
<div class="t" style="left:1070.5px;top:337.40px;line-height:24px;color:#808080;letter-spacing:1.2px;">方向:</div>
<div style="left:1124.4px;top:333px;width:62.5px;height:28.5px;background:#cccccc;border:1px solid #c4c4c4;box-sizing:border-box;"></div>
<div class="t" style="left:1129.5px;top:337.40px;line-height:24px;color:#8a8a8a;">自动</div>
<svg style="left:1168px;top:343px" width="13" height="8" viewBox="0 0 13 8"><path d="M1 1 L6.5 6.5 L12 1" stroke="#b5b5b5" stroke-width="1.4" fill="none"/></svg>
<div style="left:1195.3px;top:340.7px;width:17px;height:17px;background:#fff;border:1px solid #cdcdcd;box-sizing:border-box;"></div>
<div class="t" style="left:1219.5px;top:337.90px;line-height:24px;color:#808080;">两端虚化</div>
<div class="t" style="right:17.5px;top:337.10px;line-height:24px;color:#8a8a8a;text-decoration:underline;text-underline-offset:.6px;text-decoration-thickness:1.2px;">预览</div>
<svg style="left:907px;top:374.59999999999997px" width="17" height="17" viewBox="0 0 17 17"><rect x="0.8" y="0.8" width="15.4" height="15.4" fill="#fff" stroke="#363636" stroke-width="1.6"/></svg>
<div class="t" style="left:932px;top:372.90px;line-height:24px;color:#111;">分辨率</div>
<div style="left:989.5px;top:369.7px;width:97.5px;height:29px;background:#cccccc;border:1px solid #c4c4c4;box-sizing:border-box;"></div>
<div class="t" style="left:993.5px;top:373.90px;line-height:24px;color:#8a8a8a;">自定义</div>
<svg style="left:1068px;top:380px" width="13" height="8" viewBox="0 0 13 8"><path d="M1 1 L6.5 6.5 L12 1" stroke="#b5b5b5" stroke-width="1.4" fill="none"/></svg>
<div style="left:1098px;top:370px;width:47.5px;height:28.5px;background:#f0f0f0;border:1px solid #d6d6d6;box-sizing:border-box;box-shadow:inset 0 0 0 1px #fafafa;"></div>
<div class="t" style="left:1102px;top:372.90px;line-height:24px;color:#6d6d6d;letter-spacing:.36px;">1280</div>
<div class="t" style="left:1154px;top:373.90px;line-height:24px;color:#808080;">x</div>
<div style="left:1171px;top:370px;width:47.5px;height:28.5px;background:#f0f0f0;border:1px solid #d6d6d6;box-sizing:border-box;box-shadow:inset 0 0 0 1px #fafafa;"></div>
<div class="t" style="left:1175px;top:372.90px;line-height:24px;color:#6d6d6d;letter-spacing:.36px;">720</div>
<svg style="left:1228px;top:377px" width="20" height="14" viewBox="0 0 20 14"><path d="M1.5 7 H18.5 M6 2.5 L1.5 7 L6 11.5 M14 2.5 L18.5 7 L14 11.5" stroke="#2a2a2a" stroke-width="1.5" fill="none"/></svg>
<div class="t" style="right:17.5px;top:374.30px;line-height:24px;color:#8a8a8a;text-decoration:underline;text-underline-offset:.6px;text-decoration-thickness:1.2px;">预览</div>
<div class="t" style="left:932px;top:404.90px;line-height:24px;color:#808080;letter-spacing:1.2px;">模式:</div>
<div style="left:987.0px;top:406.3px;width:17px;height:17px;background:#fff;border:1px solid #cbcbcb;border-radius:50%;box-sizing:border-box;"></div>
<div style="left:991.0px;top:410.3px;width:9px;height:9px;background:#c9c9c9;border-radius:50%;"></div>
<div class="t" style="left:1012px;top:404.90px;line-height:24px;color:#808080;">拉伸</div>
<div style="left:1060.1px;top:406.3px;width:17px;height:17px;background:#fff;border:1px solid #cbcbcb;border-radius:50%;box-sizing:border-box;"></div>
<div class="t" style="left:1085px;top:404.90px;line-height:24px;color:#808080;">裁切</div>
<div style="left:1133.8px;top:406.3px;width:17px;height:17px;background:#fff;border:1px solid #cbcbcb;border-radius:50%;box-sizing:border-box;"></div>
<div class="t" style="left:1159px;top:404.90px;line-height:24px;color:#808080;">原比例</div>
<div style="left:1231.4px;top:407px;width:17px;height:17px;background:#fff;border:1px solid #cdcdcd;box-sizing:border-box;"></div>
<div class="t" style="left:1256px;top:404.90px;line-height:24px;color:#808080;">背景</div>
<div style="left:1298.2px;top:407px;width:17px;height:17px;background:#fff;border:1px solid #cdcdcd;box-sizing:border-box;"></div>
<div class="t" style="left:1323px;top:404.90px;line-height:24px;color:#808080;">倒影</div>
<div style="left:1364.7px;top:400.8px;width:60.5px;height:28.5px;border:1px solid #b4b4b4;box-sizing:border-box;background:#f0f0f0;"></div>
<div style="left:1367.7px;top:403.8px;width:31px;height:22.5px;background:#f1f1f1;border:1px solid #dadada;box-sizing:border-box;box-shadow:inset 0 0 0 1px #fbfbfb;"></div>
<div class="t" style="left:1371.2px;top:404.75px;line-height:24px;color:#6d6d6d;letter-spacing:.36px;">0.5</div>
<div style="left:1401.7px;top:403.8px;width:18px;height:22.5px;border:1px solid #dedede;box-sizing:border-box;background:#f0f0f0;"></div>
<div style="left:1401.7px;top:414.55px;width:18px;height:1.2px;background:#d8d8d8;"></div>
<svg style="left:1406.7px;top:407.0px" width="8" height="4.8" viewBox="0 0 8 4.8"><path d="M0 4.8 L4 0 L8 4.8 Z" fill="#555"/></svg>
<svg style="left:1406.7px;top:418.5px" width="8" height="4.8" viewBox="0 0 8 4.8"><path d="M0 0 L4 4.8 L8 0 Z" fill="#555"/></svg>
<div style="left:1439.3px;top:408.4px;width:16px;height:16px;border:1px solid #d0d0d0;border-radius:50%;box-sizing:border-box;"></div>
<div class="t" style="left:1439.3px;top:408.4px;width:16px;height:16px;line-height:16.5px;text-align:center;font-size:12px;font-weight:bold;color:#5a5a5a;">?</div>
<svg style="left:907px;top:431.9px" width="17" height="17" viewBox="0 0 17 17"><rect x="0.8" y="0.8" width="15.4" height="15.4" fill="#fff" stroke="#363636" stroke-width="1.6"/></svg>
<div class="t" style="left:932px;top:429.90px;line-height:24px;color:#111;letter-spacing:-.1px;">旋转&amp;翻转</div>
<div class="t" style="right:17.5px;top:432.10px;line-height:24px;color:#8a8a8a;text-decoration:underline;text-underline-offset:.6px;text-decoration-thickness:1.2px;">预览</div>
<div style="left:932.2px;top:457.0px;width:17px;height:17px;background:#fff;border:1px solid #cbcbcb;border-radius:50%;box-sizing:border-box;"></div>
<div style="left:936.2px;top:461.0px;width:9px;height:9px;background:#c9c9c9;border-radius:50%;"></div>
<div class="t" style="left:957px;top:455.90px;line-height:24px;color:#808080;">左转90度</div>
<div style="left:1040.4px;top:457.0px;width:17px;height:17px;background:#fff;border:1px solid #cbcbcb;border-radius:50%;box-sizing:border-box;"></div>
<div class="t" style="left:1065.5px;top:455.90px;line-height:24px;color:#808080;">右转90度</div>
<div style="left:1148.4px;top:457.0px;width:17px;height:17px;background:#fff;border:1px solid #cbcbcb;border-radius:50%;box-sizing:border-box;"></div>
<div class="t" style="left:1173px;top:455.90px;line-height:24px;color:#808080;">水平翻转</div>
<div style="left:1254.1px;top:457.0px;width:17px;height:17px;background:#fff;border:1px solid #cbcbcb;border-radius:50%;box-sizing:border-box;"></div>
<div class="t" style="left:1279.5px;top:455.90px;line-height:24px;color:#808080;">垂直翻转</div>
<div style="left:932.2px;top:486.1px;width:17px;height:17px;background:#fff;border:1px solid #cbcbcb;border-radius:50%;box-sizing:border-box;"></div>
<div class="t" style="left:957px;top:484.90px;line-height:24px;color:#808080;">随机</div>
<div style="left:1008.3px;top:481.2px;width:70.7px;height:28.5px;border:1px solid #b4b4b4;box-sizing:border-box;background:#f0f0f0;"></div>
<div style="left:1011.3px;top:484.2px;width:43.7px;height:22.5px;background:#f1f1f1;border:1px solid #dadada;box-sizing:border-box;box-shadow:inset 0 0 0 1px #fbfbfb;"></div>
<div class="t" style="left:1014.8px;top:485.15px;line-height:24px;color:#6d6d6d;letter-spacing:.36px;">-1.0</div>
<div style="left:1058.0px;top:484.2px;width:18px;height:22.5px;border:1px solid #dedede;box-sizing:border-box;background:#f0f0f0;"></div>
<div style="left:1058.0px;top:494.95px;width:18px;height:1.2px;background:#d8d8d8;"></div>
<svg style="left:1063.0px;top:487.4px" width="8" height="4.8" viewBox="0 0 8 4.8"><path d="M0 4.8 L4 0 L8 4.8 Z" fill="#555"/></svg>
<svg style="left:1063.0px;top:498.9px" width="8" height="4.8" viewBox="0 0 8 4.8"><path d="M0 0 L4 4.8 L8 0 Z" fill="#555"/></svg>
<div style="left:1085.8px;top:496px;width:5.5px;height:1.3px;background:#8a8a8a;"></div>
<div style="left:1099px;top:481.2px;width:70.7px;height:28.5px;border:1px solid #b4b4b4;box-sizing:border-box;background:#f0f0f0;"></div>
<div style="left:1102px;top:484.2px;width:43.7px;height:22.5px;background:#f1f1f1;border:1px solid #dadada;box-sizing:border-box;box-shadow:inset 0 0 0 1px #fbfbfb;"></div>
<div class="t" style="left:1105.5px;top:485.15px;line-height:24px;color:#6d6d6d;letter-spacing:.36px;">1.0</div>
<div style="left:1148.7px;top:484.2px;width:18px;height:22.5px;border:1px solid #dedede;box-sizing:border-box;background:#f0f0f0;"></div>
<div style="left:1148.7px;top:494.95px;width:18px;height:1.2px;background:#d8d8d8;"></div>
<svg style="left:1153.7px;top:487.4px" width="8" height="4.8" viewBox="0 0 8 4.8"><path d="M0 4.8 L4 0 L8 4.8 Z" fill="#555"/></svg>
<svg style="left:1153.7px;top:498.9px" width="8" height="4.8" viewBox="0 0 8 4.8"><path d="M0 0 L4 4.8 L8 0 Z" fill="#555"/></svg>
<div style="left:1178px;top:486.5px;width:17px;height:17px;background:#fff;border:1px solid #cdcdcd;box-sizing:border-box;"></div>
<div class="t" style="left:1202.8px;top:484.90px;line-height:24px;color:#808080;">完全显示</div>
<div style="left:1285.2px;top:486.5px;width:17px;height:17px;background:#fff;border:1px solid #cdcdcd;box-sizing:border-box;"></div>
<svg style="left:1285.2px;top:486.5px" width="17" height="17" viewBox="0 0 17 17"><path d="M3 8.4 L6.7 12.3 L14.3 3.6" stroke="#c4c4c4" stroke-width="1.7" fill="none"/></svg>
<div class="t" style="left:1310px;top:484.90px;line-height:24px;color:#808080;">黑边去除</div>
<div style="left:1385.8px;top:487px;width:16px;height:16px;border:1px solid #d0d0d0;border-radius:50%;box-sizing:border-box;"></div>
<div class="t" style="left:1385.8px;top:487px;width:16px;height:16px;line-height:16.5px;text-align:center;font-size:12px;font-weight:bold;color:#5a5a5a;">?</div>
<div class="t" style="right:16.5px;top:505.20px;line-height:24px;color:#2b8bd6;">以下诸值，</div>
<div class="t" style="right:17.5px;top:522.90px;line-height:24px;color:#2b8bd6;">不同视频随机取值调整</div>
<svg style="left:907px;top:523.0px" width="17" height="17" viewBox="0 0 17 17"><rect x="0.8" y="0.8" width="15.4" height="15.4" fill="#fff" stroke="#363636" stroke-width="1.6"/></svg>
<svg style="left:907px;top:523.0px" width="17" height="17" viewBox="0 0 17 17"><path d="M3 8.4 L6.7 12.3 L14.3 3.6" stroke="#3a3a3a" stroke-width="1.7" fill="none"/></svg>
<div class="t" style="left:932px;top:521.40px;line-height:24px;color:#111;">帧率设置</div>
<div style="left:1008.3px;top:518.2px;width:70.7px;height:28.5px;border:1px solid #a9a9a9;box-sizing:border-box;background:#f0f0f0;"></div>
<div style="left:1011.3px;top:521.2px;width:43.7px;height:22.5px;background:#fff;border:1px solid #6f6f6f;box-sizing:border-box;"></div>
<div class="t" style="left:1014.8px;top:522.15px;line-height:24px;color:#1c1c1c;letter-spacing:.36px;">24.0</div>
<div style="left:1058.0px;top:521.2px;width:18px;height:22.5px;border:1px solid #b9b9b9;box-sizing:border-box;background:#e9e9e9;"></div>
<div style="left:1058.0px;top:531.95px;width:18px;height:1.2px;background:#b9b9b9;"></div>
<svg style="left:1063.0px;top:524.4000000000001px" width="8" height="4.8" viewBox="0 0 8 4.8"><path d="M0 4.8 L4 0 L8 4.8 Z" fill="#111"/></svg>
<svg style="left:1063.0px;top:535.9000000000001px" width="8" height="4.8" viewBox="0 0 8 4.8"><path d="M0 0 L4 4.8 L8 0 Z" fill="#111"/></svg>
<div style="left:1085.8px;top:533px;width:5.5px;height:1.4px;background:#555;"></div>
<div style="left:1099px;top:518.2px;width:70.7px;height:28.5px;border:1px solid #a9a9a9;box-sizing:border-box;background:#f0f0f0;"></div>
<div style="left:1102px;top:521.2px;width:43.7px;height:22.5px;background:#fff;border:1px solid #6f6f6f;box-sizing:border-box;"></div>
<div class="t" style="left:1105.5px;top:522.15px;line-height:24px;color:#1c1c1c;letter-spacing:.36px;">30.0</div>
<div style="left:1148.7px;top:521.2px;width:18px;height:22.5px;border:1px solid #b9b9b9;box-sizing:border-box;background:#e9e9e9;"></div>
<div style="left:1148.7px;top:531.95px;width:18px;height:1.2px;background:#b9b9b9;"></div>
<svg style="left:1153.7px;top:524.4000000000001px" width="8" height="4.8" viewBox="0 0 8 4.8"><path d="M0 4.8 L4 0 L8 4.8 Z" fill="#111"/></svg>
<svg style="left:1153.7px;top:535.9000000000001px" width="8" height="4.8" viewBox="0 0 8 4.8"><path d="M0 0 L4 4.8 L8 0 Z" fill="#111"/></svg>
<div class="t" style="left:1176px;top:521.40px;line-height:24px;color:#808080;letter-spacing:1.05px;">(12~120)</div>
<svg style="left:907px;top:555.0px" width="17" height="17" viewBox="0 0 17 17"><rect x="0.8" y="0.8" width="15.4" height="15.4" fill="#fff" stroke="#363636" stroke-width="1.6"/></svg>
<div class="t" style="left:932px;top:553.40px;line-height:24px;color:#111;">抽帧 - 每</div>
<div style="left:1008.3px;top:550.4px;width:70.7px;height:28.5px;border:1px solid #b4b4b4;box-sizing:border-box;background:#f0f0f0;"></div>
<div style="left:1011.3px;top:553.4px;width:43.7px;height:22.5px;background:#f1f1f1;border:1px solid #dadada;box-sizing:border-box;box-shadow:inset 0 0 0 1px #fbfbfb;"></div>
<div class="t" style="left:1014.8px;top:554.35px;line-height:24px;color:#6d6d6d;letter-spacing:.36px;">25</div>
<div style="left:1058.0px;top:553.4px;width:18px;height:22.5px;border:1px solid #dedede;box-sizing:border-box;background:#f0f0f0;"></div>
<div style="left:1058.0px;top:564.15px;width:18px;height:1.2px;background:#d8d8d8;"></div>
<svg style="left:1063.0px;top:556.6px" width="8" height="4.8" viewBox="0 0 8 4.8"><path d="M0 4.8 L4 0 L8 4.8 Z" fill="#555"/></svg>
<svg style="left:1063.0px;top:568.1px" width="8" height="4.8" viewBox="0 0 8 4.8"><path d="M0 0 L4 4.8 L8 0 Z" fill="#555"/></svg>
<div style="left:1085.8px;top:565px;width:5.5px;height:1.3px;background:#8a8a8a;"></div>
<div style="left:1099px;top:550.4px;width:70.7px;height:28.5px;border:1px solid #b4b4b4;box-sizing:border-box;background:#f0f0f0;"></div>
<div style="left:1102px;top:553.4px;width:43.7px;height:22.5px;background:#f1f1f1;border:1px solid #dadada;box-sizing:border-box;box-shadow:inset 0 0 0 1px #fbfbfb;"></div>
<div class="t" style="left:1105.5px;top:554.35px;line-height:24px;color:#6d6d6d;letter-spacing:.36px;">30</div>
<div style="left:1148.7px;top:553.4px;width:18px;height:22.5px;border:1px solid #dedede;box-sizing:border-box;background:#f0f0f0;"></div>
<div style="left:1148.7px;top:564.15px;width:18px;height:1.2px;background:#d8d8d8;"></div>
<svg style="left:1153.7px;top:556.6px" width="8" height="4.8" viewBox="0 0 8 4.8"><path d="M0 4.8 L4 0 L8 4.8 Z" fill="#555"/></svg>
<svg style="left:1153.7px;top:568.1px" width="8" height="4.8" viewBox="0 0 8 4.8"><path d="M0 0 L4 4.8 L8 0 Z" fill="#555"/></svg>
<div class="t" style="left:1176px;top:554.90px;line-height:24px;color:#808080;">帧抽一帧</div>
<div style="left:1264.4px;top:556.5px;width:16px;height:16px;border:1px solid #d0d0d0;border-radius:50%;box-sizing:border-box;"></div>
<div class="t" style="left:1264.4px;top:556.5px;width:16px;height:16px;line-height:16.5px;text-align:center;font-size:12px;font-weight:bold;color:#5a5a5a;">?</div>
<div class="t" style="right:17.5px;top:554.90px;line-height:24px;color:#8a8a8a;text-decoration:underline;text-underline-offset:.6px;text-decoration-thickness:1.2px;">预览</div>
<svg style="left:907px;top:587.0px" width="17" height="17" viewBox="0 0 17 17"><rect x="0.8" y="0.8" width="15.4" height="15.4" fill="#fff" stroke="#363636" stroke-width="1.6"/></svg>
<div class="t" style="left:932px;top:585.40px;line-height:24px;color:#111;">动态缩放</div>
<div style="left:1008.3px;top:582.4px;width:70.7px;height:28.5px;border:1px solid #b4b4b4;box-sizing:border-box;background:#f0f0f0;"></div>
<div style="left:1011.3px;top:585.4px;width:43.7px;height:22.5px;background:#f1f1f1;border:1px solid #dadada;box-sizing:border-box;box-shadow:inset 0 0 0 1px #fbfbfb;"></div>
<div class="t" style="left:1014.8px;top:586.35px;line-height:24px;color:#6d6d6d;letter-spacing:.36px;">0.01</div>
<div style="left:1058.0px;top:585.4px;width:18px;height:22.5px;border:1px solid #dedede;box-sizing:border-box;background:#f0f0f0;"></div>
<div style="left:1058.0px;top:596.15px;width:18px;height:1.2px;background:#d8d8d8;"></div>
<svg style="left:1063.0px;top:588.6px" width="8" height="4.8" viewBox="0 0 8 4.8"><path d="M0 4.8 L4 0 L8 4.8 Z" fill="#555"/></svg>
<svg style="left:1063.0px;top:600.1px" width="8" height="4.8" viewBox="0 0 8 4.8"><path d="M0 0 L4 4.8 L8 0 Z" fill="#555"/></svg>
<div style="left:1085.8px;top:597px;width:5.5px;height:1.3px;background:#8a8a8a;"></div>
<div style="left:1099px;top:582.4px;width:70.7px;height:28.5px;border:1px solid #b4b4b4;box-sizing:border-box;background:#f0f0f0;"></div>
<div style="left:1102px;top:585.4px;width:43.7px;height:22.5px;background:#f1f1f1;border:1px solid #dadada;box-sizing:border-box;box-shadow:inset 0 0 0 1px #fbfbfb;"></div>
<div class="t" style="left:1105.5px;top:586.35px;line-height:24px;color:#6d6d6d;letter-spacing:.36px;">0.10</div>
<div style="left:1148.7px;top:585.4px;width:18px;height:22.5px;border:1px solid #dedede;box-sizing:border-box;background:#f0f0f0;"></div>
<div style="left:1148.7px;top:596.15px;width:18px;height:1.2px;background:#d8d8d8;"></div>
<svg style="left:1153.7px;top:588.6px" width="8" height="4.8" viewBox="0 0 8 4.8"><path d="M0 4.8 L4 0 L8 4.8 Z" fill="#555"/></svg>
<svg style="left:1153.7px;top:600.1px" width="8" height="4.8" viewBox="0 0 8 4.8"><path d="M0 0 L4 4.8 L8 0 Z" fill="#555"/></svg>
<div class="t" style="left:1176px;top:586.30px;line-height:24px;color:#808080;letter-spacing:.95px;">(0.0~1.0)</div>
<div style="left:1264.4px;top:590px;width:16px;height:16px;border:1px solid #d0d0d0;border-radius:50%;box-sizing:border-box;"></div>
<div class="t" style="left:1264.4px;top:590px;width:16px;height:16px;line-height:16.5px;text-align:center;font-size:12px;font-weight:bold;color:#5a5a5a;">?</div>
<div class="t" style="right:17.5px;top:586.90px;line-height:24px;color:#8a8a8a;text-decoration:underline;text-underline-offset:.6px;text-decoration-thickness:1.2px;">预览</div>
<svg style="left:907px;top:619.0px" width="17" height="17" viewBox="0 0 17 17"><rect x="0.8" y="0.8" width="15.4" height="15.4" fill="#fff" stroke="#363636" stroke-width="1.6"/></svg>
<div class="t" style="left:932px;top:617.20px;line-height:24px;color:#111;letter-spacing:.08px;">码率调整 - 决定视频体积与清晰度</div>
<div class="t" style="right:17.5px;top:618.10px;line-height:24px;color:#2483d4;text-decoration:underline;text-underline-offset:.6px;text-decoration-thickness:1.2px;">参数重置</div>
<div style="left:932.2px;top:643.6px;width:17px;height:17px;background:#fff;border:1px solid #cbcbcb;border-radius:50%;box-sizing:border-box;"></div>
<div style="left:936.2px;top:647.6px;width:9px;height:9px;background:#c9c9c9;border-radius:50%;"></div>
<div class="t" style="left:957px;top:642.90px;line-height:24px;color:#808080;">倍率</div>
<div style="left:1008.3px;top:638.8px;width:70.7px;height:28.5px;border:1px solid #b4b4b4;box-sizing:border-box;background:#f0f0f0;"></div>
<div style="left:1011.3px;top:641.8px;width:43.7px;height:22.5px;background:#f1f1f1;border:1px solid #dadada;box-sizing:border-box;box-shadow:inset 0 0 0 1px #fbfbfb;"></div>
<div class="t" style="left:1014.8px;top:642.75px;line-height:24px;color:#6d6d6d;letter-spacing:.36px;">1.05</div>
<div style="left:1058.0px;top:641.8px;width:18px;height:22.5px;border:1px solid #dedede;box-sizing:border-box;background:#f0f0f0;"></div>
<div style="left:1058.0px;top:652.55px;width:18px;height:1.2px;background:#d8d8d8;"></div>
<svg style="left:1063.0px;top:645.0px" width="8" height="4.8" viewBox="0 0 8 4.8"><path d="M0 4.8 L4 0 L8 4.8 Z" fill="#555"/></svg>
<svg style="left:1063.0px;top:656.5px" width="8" height="4.8" viewBox="0 0 8 4.8"><path d="M0 0 L4 4.8 L8 0 Z" fill="#555"/></svg>
<div style="left:1085.8px;top:654px;width:5.5px;height:1.3px;background:#8a8a8a;"></div>
<div style="left:1099px;top:638.8px;width:70.7px;height:28.5px;border:1px solid #b4b4b4;box-sizing:border-box;background:#f0f0f0;"></div>
<div style="left:1102px;top:641.8px;width:43.7px;height:22.5px;background:#f1f1f1;border:1px solid #dadada;box-sizing:border-box;box-shadow:inset 0 0 0 1px #fbfbfb;"></div>
<div class="t" style="left:1105.5px;top:642.75px;line-height:24px;color:#6d6d6d;letter-spacing:.36px;">1.95</div>
<div style="left:1148.7px;top:641.8px;width:18px;height:22.5px;border:1px solid #dedede;box-sizing:border-box;background:#f0f0f0;"></div>
<div style="left:1148.7px;top:652.55px;width:18px;height:1.2px;background:#d8d8d8;"></div>
<svg style="left:1153.7px;top:645.0px" width="8" height="4.8" viewBox="0 0 8 4.8"><path d="M0 4.8 L4 0 L8 4.8 Z" fill="#555"/></svg>
<svg style="left:1153.7px;top:656.5px" width="8" height="4.8" viewBox="0 0 8 4.8"><path d="M0 0 L4 4.8 L8 0 Z" fill="#555"/></svg>
<div class="t" style="left:1176px;top:642.70px;line-height:24px;color:#808080;letter-spacing:.95px;">(0.2~8.0)</div>
<div style="left:1264.4px;top:644.8px;width:16px;height:16px;border:1px solid #d0d0d0;border-radius:50%;box-sizing:border-box;"></div>
<div class="t" style="left:1264.4px;top:644.8px;width:16px;height:16px;line-height:16.5px;text-align:center;font-size:12px;font-weight:bold;color:#5a5a5a;">?</div>
<div style="left:932.2px;top:673.1px;width:17px;height:17px;background:#fff;border:1px solid #cbcbcb;border-radius:50%;box-sizing:border-box;"></div>
<div class="t" style="left:957px;top:672.50px;line-height:24px;color:#808080;">定值</div>
<div style="left:1008.3px;top:670.4px;width:91.5px;height:28.5px;background:#fff;border:1px solid #d9d9d9;box-sizing:border-box;"></div>
<div style="left:1012px;top:674px;width:61px;height:21px;background:#efefef;"></div>
<div class="t" style="left:1013px;top:672.90px;line-height:24px;color:#6d6d6d;letter-spacing:.36px;">3000</div>
<svg style="left:1081.5px;top:680.5px" width="13" height="8" viewBox="0 0 13 8"><path d="M1 1 L6.5 6.5 L12 1" stroke="#a5a5a5" stroke-width="1.3" fill="none"/></svg>
<div class="t" style="left:1107px;top:673.90px;line-height:24px;color:#808080;letter-spacing:.36px;">kb/s</div>
<div class="t" style="left:906.5px;top:712.10px;line-height:24px;color:#111;letter-spacing:.9px;">输出位置:</div>
<div style="left:996px;top:707.4px;width:424.5px;height:29px;background:#fff;border:1.5px solid #838383;box-sizing:border-box;"></div>
<div class="t" style="left:1000.5px;top:710.40px;line-height:24px;color:#222;letter-spacing:.3px;">D:\CRVideoMate Output</div>
<div style="left:1429px;top:709px;width:36px;height:27.5px;background:#e1e1e1;border:1px solid #adadad;box-sizing:border-box;"></div>
<div class="t" style="left:1429px;top:709px;width:36px;height:27.5px;line-height:29.5px;text-align:center;color:#1a1a1a;"></div>
<div class="t" style="left:1438.5px;top:711.70px;line-height:24px;color:#222;letter-spacing:1.2px;font-weight:bold;">...</div>
<svg style="left:904.8px;top:760.8px" width="22.3" height="22.3" viewBox="0 0 24 24"><path fill="none" stroke="#6e6e6e" stroke-width="1.7" stroke-linejoin="round" d="M10.2 2h3.6l.5 2.9 1.9.8 2.4-1.7 2.5 2.5-1.7 2.4.8 1.9 2.9.5v3.6l-2.9.5-.8 1.9 1.7 2.4-2.5 2.5-2.4-1.7-1.9.8-.5 2.9h-3.6l-.5-2.9-1.9-.8-2.4 1.7-2.5-2.5 1.7-2.4-.8-1.9L1 13.800v-3.600l2.900-.5.800-1.900L3 5.400l2.500-2.500 2.400 1.700 1.900-.8z"/><circle cx="12" cy="12" r="4" fill="none" stroke="#6e6e6e" stroke-width="1.7"/></svg>
<div class="t" style="left:932px;top:761.90px;line-height:24px;color:#2483d4;text-decoration:underline;text-underline-offset:.6px;text-decoration-thickness:1.2px;">选项</div>
<div class="t" style="left:976.3px;top:761.90px;line-height:24px;color:#2483d4;text-decoration:underline;text-underline-offset:.6px;text-decoration-thickness:1.2px;">打开输出文件夹</div>
<div class="t" style="left:1115px;top:761.90px;line-height:24px;color:#d4622c;letter-spacing:.9px;">裂变次数:</div>
<div style="left:1200.3px;top:755.5px;width:56.5px;height:29px;border:1px solid #a9a9a9;box-sizing:border-box;background:#f0f0f0;"></div>
<div style="left:1203.3px;top:758.5px;width:30px;height:23px;background:#fff;border:1px solid #6f6f6f;box-sizing:border-box;"></div>
<div class="t" style="left:1206.8px;top:759.70px;line-height:24px;color:#1c1c1c;letter-spacing:.36px;">1</div>
<div style="left:1236.3px;top:758.5px;width:18px;height:23px;border:1px solid #b9b9b9;box-sizing:border-box;background:#e9e9e9;"></div>
<div style="left:1236.3px;top:769.5px;width:18px;height:1.2px;background:#b9b9b9;"></div>
<svg style="left:1241.3px;top:761.7px" width="8" height="4.8" viewBox="0 0 8 4.8"><path d="M0 4.8 L4 0 L8 4.8 Z" fill="#111"/></svg>
<svg style="left:1241.3px;top:773.7px" width="8" height="4.8" viewBox="0 0 8 4.8"><path d="M0 0 L4 4.8 L8 0 Z" fill="#111"/></svg>
<div style="left:1267px;top:762px;width:16px;height:16px;border:1px solid #d0d0d0;border-radius:50%;box-sizing:border-box;"></div>
<div class="t" style="left:1267px;top:762px;width:16px;height:16px;line-height:16.5px;text-align:center;font-size:12px;font-weight:bold;color:#5a5a5a;">?</div>
<div style="left:1306px;top:746.3px;width:159px;height:39.5px;background:#e1e1e1;border:1px solid #adadad;box-sizing:border-box;"></div>
<div class="t" style="left:1306px;top:746.3px;width:159px;height:39.5px;line-height:41.5px;text-align:center;color:#1a1a1a;"></div>
<div class="t" style="left:1345.3px;top:753.70px;line-height:24px;color:#3a78b4;font-size:19.5px;letter-spacing:.5px;">开始处理</div>
<div style="left:411px;top:338.5px;width:197px;height:425.5px;background:#fcfcfc;border:1px solid #9a9a9a;box-sizing:border-box;box-shadow:3px 3px 4px rgba(0,0,0,.5);"></div>
<div style="left:412px;top:339.5px;width:32px;height:423.5px;background:#f0f0f0;"></div>
<div style="left:413px;top:407px;width:192.8px;height:29px;background:#b5d7f3;border:1.2px solid #4186c6;box-sizing:border-box;"></div>
<div class="t" style="left:458px;top:343.40px;line-height:24px;color:#111;">播放</div>
<div class="t" style="left:458px;top:373.20px;line-height:24px;color:#111;">打开文件夹</div>
<div class="t" style="left:458px;top:410.20px;line-height:24px;color:#111;">字幕</div>
<div class="t" style="left:458px;top:439.60px;line-height:24px;color:#111;">封面</div>
<div class="t" style="left:458px;top:469.10px;line-height:24px;color:#111;">独立功能</div>
<div class="t" style="left:458px;top:506.20px;line-height:24px;color:#111;">全选</div>
<div class="t" style="left:458px;top:535.70px;line-height:24px;color:#111;">反选</div>
<div class="t" style="left:458px;top:572.70px;line-height:24px;color:#111;">移除</div>
<div class="t" style="left:458px;top:602.20px;line-height:24px;color:#111;">清空</div>
<div class="t" style="left:458px;top:631.70px;line-height:24px;color:#8d8d8d;">清除无效文件</div>
<div class="t" style="left:458px;top:668.70px;line-height:24px;color:#111;">插队</div>
<div class="t" style="left:458px;top:698.20px;line-height:24px;color:#111;">排序</div>
<div class="t" style="left:458px;top:735.40px;line-height:24px;color:#111;">媒体信息</div>
<div class="t" style="left:515.5px;top:506.20px;line-height:24px;color:#222;letter-spacing:.5px;">Ctrl+A</div>
<div class="t" style="left:515.5px;top:572.70px;line-height:24px;color:#222;letter-spacing:.5px;">Delete</div>
<div style="left:454.5px;top:403.3px;width:151.5px;height:1.1px;background:#d4d4d4;"></div>
<div style="left:454.5px;top:499.3px;width:151.5px;height:1.1px;background:#d4d4d4;"></div>
<div style="left:454.5px;top:565.3px;width:151.5px;height:1.1px;background:#d4d4d4;"></div>
<div style="left:454.5px;top:661.3px;width:151.5px;height:1.1px;background:#d4d4d4;"></div>
<div style="left:454.5px;top:727.8px;width:151.5px;height:1.1px;background:#d4d4d4;"></div>
<svg style="left:587.8px;top:417.40000000000003px" width="5.6" height="10" viewBox="0 0 6 11"><path d="M0.3 0.3 L5.6 5.5 L0.3 10.7 Z" fill="#111"/></svg>
<svg style="left:587.8px;top:446.8px" width="5.6" height="10" viewBox="0 0 6 11"><path d="M0.3 0.3 L5.6 5.5 L0.3 10.7 Z" fill="#111"/></svg>
<svg style="left:587.8px;top:476.3px" width="5.6" height="10" viewBox="0 0 6 11"><path d="M0.3 0.3 L5.6 5.5 L0.3 10.7 Z" fill="#111"/></svg>
<svg style="left:587.8px;top:705.4px" width="5.6" height="10" viewBox="0 0 6 11"><path d="M0.3 0.3 L5.6 5.5 L0.3 10.7 Z" fill="#111"/></svg>
<svg style="left:421.5px;top:348.7px" width="12" height="13" viewBox="0 0 12 13"><path d="M0.3 0.2 L11.4 6.6 L0.3 12.8 Z" fill="#15803a"/></svg>
<div class="t" style="left:417.5px;top:410.20px;line-height:24px;color:#7a7a7a;transform:scaleX(.85);transform-origin:0 50%;">CC</div>
<div class="t" style="left:418.2px;top:439.60px;line-height:24px;color:#7a7a7a;transform:scaleX(.86);transform-origin:0 50%;">FC</div>
<svg style="left:417.5px;top:574.5px" width="19.5" height="19.5" viewBox="0 0 20 20"><path d="M0.9 3 L2.9 1 L11 8.6 L19 17.6 L18.4 18.2 L9.2 10.6 Z" fill="#222"/><path d="M2 15.4 L4.6 18.2 L11.2 10.6 L18.6 2.2 L18 1.6 L9.4 8.4 Z" fill="#222"/><circle cx="2.2" cy="2.3" r="1.4" fill="#222"/><circle cx="3.4" cy="16.6" r="1.7" fill="#222"/></svg>
<svg style="left:422px;top:672px" width="12" height="16" viewBox="0 0 12 16"><path d="M6 15 V1.5 M1.5 6 L6 1.5 L10.5 6" stroke="#333" stroke-width="1.4" fill="none"/></svg>
<svg style="left:417.5px;top:737px" width="20" height="20" viewBox="0 0 20 20"><circle cx="10" cy="10" r="8.6" fill="none" stroke="#444" stroke-width="1.3"/><path d="M10 8.5 V14.5" stroke="#444" stroke-width="1.6"/><circle cx="10" cy="5.8" r="1.1" fill="#444"/></svg>
<div style="left:607.8px;top:407.7px;width:206.2px;height:158.8px;background:#fcfcfc;border:1px solid #9a9a9a;box-sizing:border-box;box-shadow:3px 3px 4px rgba(0,0,0,.5);"></div>
<div style="left:608.8px;top:408.7px;width:31px;height:156.8px;background:#f0f0f0;"></div>
<div class="t" style="left:655.8px;top:413.10px;line-height:24px;color:#111;">载入字幕</div>
<div class="t" style="left:655.8px;top:442.70px;line-height:24px;color:#8d8d8d;">全部解除</div>
<div class="t" style="left:655.8px;top:471.90px;line-height:24px;color:#111;">全部重载</div>
<div class="t" style="left:655.8px;top:500.90px;line-height:24px;color:#111;">字幕设置</div>
<div class="t" style="left:655.8px;top:538.70px;line-height:24px;color:#111;letter-spacing:.7px;">启动 VideoSrt</div>
<div style="left:652px;top:531.3px;width:160px;height:1.1px;background:#d4d4d4;"></div>
<svg style="left:616.5px;top:540.5px" width="18" height="19" viewBox="0 0 18 19"><path d="M4.5 0.8 H12.5 L16.8 5 V17.6 H4.5 Z" fill="#eef4fb" stroke="#b8cfe6" stroke-width="1"/><path d="M12.3 1 V5.2 H16.6" fill="none" stroke="#b8cfe6" stroke-width="1"/><rect x="0.5" y="5.5" width="10.5" height="10" fill="#2b7fd3"/><path d="M4 8 L8 10.5 L4 13 Z" fill="#fff"/><path d="M12.5 8.5 H15 M12.5 11 H15 M12.5 13.5 H15" stroke="#9cc0e6" stroke-width="1.1"/></svg>
<svg style="left:556.3px;top:418.3px" width="20" height="28" viewBox="0 0 20 28"><path d="M1.2 1.2 V22.3 L5.9 17.6 L9.7 26.2 L13.2 24.6 L9.5 16.2 H16.2 Z" fill="#fff" stroke="#1a1a1a" stroke-width="1.15" stroke-linejoin="round"/></svg>
</body></html>
